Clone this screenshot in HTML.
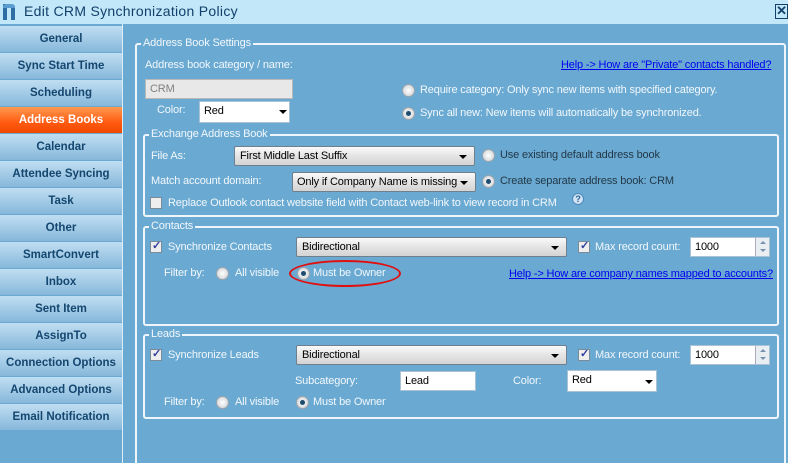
<!DOCTYPE html>
<html><head><meta charset="utf-8"><style>
*{margin:0;padding:0;box-sizing:border-box}
html,body{width:788px;height:463px;overflow:hidden}
body{background:#6aaad2;font-family:"Liberation Sans",sans-serif;font-size:11px;letter-spacing:-0.16px;color:#f2f7fb;position:relative}
.a{position:absolute;white-space:nowrap}
.title{left:0;top:0;width:788px;height:24px;background:#c2e7f9}
.nav{left:0;width:122px;height:26px;background:linear-gradient(#c0def2,#a3cbe6 50%,#86b7da);color:#14466f;font-weight:bold;font-size:11.5px;letter-spacing:0;text-align:center;line-height:26px}
.nav.sel{background:linear-gradient(#ff9a50,#ff5a10 60%,#f04a00);color:#fff}
.grp{position:absolute;border:2px solid #eef6fb;border-radius:3px}
.lg{position:absolute;top:-8px;left:4px;background:#6aaad2;padding:0 2px;color:#f2f7fb;font-size:11px;line-height:13px}
.dd{position:absolute;height:20px;border:1px solid #6f7f8c;border-radius:2px;background:linear-gradient(#fafafa,#e4e4e4 50%,#d4d4d4);color:#000;padding:3px 5px;font-size:11px}
.dd:after{content:"";position:absolute;right:7px;top:8px;border-left:4px solid transparent;border-right:4px solid transparent;border-top:4px solid #000}
.tb{position:absolute;height:20px;background:#fff;border:1px solid #a9c3d4;color:#000;padding:3px 4px;font-size:11px}
.rb{position:absolute;width:13px;height:13px;border-radius:50%;background:radial-gradient(#fff,#c8ccd0);border:1px solid #9aa4ad}
.rb.on:after{content:"";position:absolute;left:3px;top:3px;width:5px;height:5px;border-radius:50%;background:#1f4c6e}
.cb{position:absolute;width:12px;height:12px;background:#eee;border:1px solid #7b8b98}
.cb.on:after{content:"✓";position:absolute;left:1px;top:-3px;color:#3040a0;font-size:11px;font-weight:bold}
.lnk{color:#0000ee;text-decoration:underline}
.dk{color:#233848}
.sp{position:absolute;width:14px;height:18px;background:#e8eef2;border-left:1px solid #aab}
.sp:before{content:"";position:absolute;left:4px;top:3px;border-left:3px solid transparent;border-right:3px solid transparent;border-bottom:3px solid #7890b0}
.sp:after{content:"";position:absolute;left:4px;top:11px;border-left:3px solid transparent;border-right:3px solid transparent;border-top:3px solid #7890b0}
</style></head><body>
<div class="a title"></div>
<div class="a" style="left:3px;top:4px;width:4px;height:16px;background:#2d6fa5"></div>
<div class="a" style="left:3px;top:4px;width:12px;height:4px;background:#5a9cd0;border-radius:3px 3px 0 0"></div>
<div class="a" style="left:11px;top:8px;width:4px;height:12px;background:#2d6fa5"></div>
<div class="a" style="left:24px;top:3px;font-size:14px;letter-spacing:0.3px;color:#12406a">Edit CRM Synchronization Policy</div>
<div class="a" style="left:775px;top:4px;width:13px;height:15px;border:1px solid #12406a;color:#12406a;font-weight:bold;font-size:13px;line-height:12px;text-align:center">✕</div>

<div class="a nav" style="top:26px">General</div>
<div class="a nav" style="top:53px">Sync Start Time</div>
<div class="a nav" style="top:80px">Scheduling</div>
<div class="a nav sel" style="top:107px">Address Books</div>
<div class="a nav" style="top:134px">Calendar</div>
<div class="a nav" style="top:161px">Attendee Syncing</div>
<div class="a nav" style="top:188px">Task</div>
<div class="a nav" style="top:215px">Other</div>
<div class="a nav" style="top:242px">SmartConvert</div>
<div class="a nav" style="top:269px">Inbox</div>
<div class="a nav" style="top:296px">Sent Item</div>
<div class="a nav" style="top:323px">AssignTo</div>
<div class="a nav" style="top:350px">Connection Options</div>
<div class="a nav" style="top:377px">Advanced Options</div>
<div class="a nav" style="top:404px">Email Notification</div>
<div class="a" style="left:122px;top:24px;width:1px;height:439px;background:#dceef8"></div>

<div class="grp" style="left:135px;top:43px;width:651px;height:430px"><div class="lg">Address Book Settings</div></div>
<div class="a" style="left:145px;top:59px">Address book category / name:</div>
<div class="a lnk" style="left:561px;top:59px">Help -&gt; How are "Private" contacts handled?</div>
<div class="tb" style="left:145px;top:79px;width:148px;background:#e8e8e8;color:#808080;border-color:#b8b8b8">CRM</div>
<div class="a" style="left:157px;top:104px">Color:</div>
<div class="tb" style="left:199px;top:101px;width:91px;height:22px">Red</div>
<div class="a" style="left:279px;top:110px;border-left:4px solid transparent;border-right:4px solid transparent;border-top:4px solid #000"></div>
<div class="rb" style="left:402px;top:84px"></div>
<div class="a" style="left:420px;top:84px">Require category: Only sync new items with specified category.</div>
<div class="rb on" style="left:402px;top:107px"></div>
<div class="a" style="left:420px;top:107px">Sync all new: New items will automatically be synchronized.</div>

<div class="grp" style="left:143px;top:134px;width:636px;height:83px"><div class="lg">Exchange Address Book</div></div>
<div class="a" style="left:151px;top:150px">File As:</div>
<div class="dd" style="left:234px;top:146px;width:241px">First Middle Last Suffix</div>
<div class="rb" style="left:482px;top:149px"></div>
<div class="a dk" style="left:500px;top:149px">Use existing default address book</div>
<div class="a" style="left:151px;top:175px">Match account domain:</div>
<div class="dd" style="left:292px;top:172px;width:184px;padding-left:4px">Only if Company Name is missing</div>
<div class="rb on" style="left:482px;top:175px;"></div>
<div class="a dk" style="left:500px;top:175px">Create separate address book: CRM</div>
<div class="cb" style="left:150px;top:197px"></div>
<div class="a" style="left:168px;top:197px">Replace Outlook contact website field with Contact web-link to view record in CRM</div>
<div class="a" style="left:572px;top:193px;width:12px;height:12px;border-radius:50%;background:#cfe3f2;border:1px solid #4d87bb;color:#2d5f99;font-size:9px;font-weight:bold;text-align:center;line-height:10px">?</div>

<div class="grp" style="left:143px;top:226px;width:636px;height:100px"><div class="lg">Contacts</div></div>
<div class="cb on" style="left:150px;top:241px"></div>
<div class="a" style="left:168px;top:241px">Synchronize Contacts</div>
<div class="dd" style="left:296px;top:237px;width:271px">Bidirectional</div>
<div class="cb on" style="left:578px;top:241px"></div>
<div class="a" style="left:595px;top:241px">Max record count:</div>
<div class="tb" style="left:690px;top:237px;width:80px;height:20px">1000</div>
<div class="sp" style="left:755px;top:238px"></div>
<div class="a" style="left:164px;top:267px">Filter by:</div>
<div class="rb" style="left:216px;top:267px"></div>
<div class="a" style="left:235px;top:267px">All visible</div>
<div class="rb on" style="left:297px;top:267px"></div>
<div class="a" style="left:313px;top:267px">Must be Owner</div>
<div class="a" style="left:289px;top:260px;width:112px;height:27px;border:2px solid #e01010;border-radius:50%"></div>
<div class="a lnk" style="left:509px;top:268px">Help -&gt; How are company names mapped to accounts?</div>

<div class="grp" style="left:143px;top:334px;width:636px;height:85px"><div class="lg">Leads</div></div>
<div class="cb on" style="left:150px;top:349px"></div>
<div class="a" style="left:168px;top:349px">Synchronize Leads</div>
<div class="dd" style="left:296px;top:345px;width:271px">Bidirectional</div>
<div class="cb on" style="left:578px;top:349px"></div>
<div class="a" style="left:595px;top:349px">Max record count:</div>
<div class="tb" style="left:690px;top:345px;width:80px;height:20px">1000</div>
<div class="sp" style="left:755px;top:346px"></div>
<div class="a" style="left:295px;top:375px">Subcategory:</div>
<div class="tb" style="left:400px;top:371px;width:76px">Lead</div>
<div class="a" style="left:513px;top:375px">Color:</div>
<div class="tb" style="left:567px;top:370px;width:90px;height:22px">Red</div>
<div class="a" style="left:645px;top:380px;border-left:4px solid transparent;border-right:4px solid transparent;border-top:4px solid #000"></div>
<div class="a" style="left:164px;top:396px">Filter by:</div>
<div class="rb" style="left:216px;top:396px"></div>
<div class="a" style="left:235px;top:396px">All visible</div>
<div class="rb on" style="left:296px;top:396px"></div>
<div class="a" style="left:313px;top:396px">Must be Owner</div>
</body></html>
